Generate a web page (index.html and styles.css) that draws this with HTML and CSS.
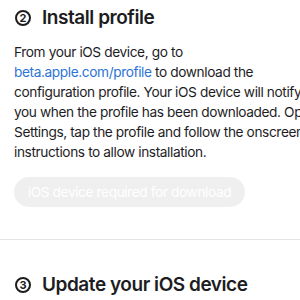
FILE: index.html
```html
<!DOCTYPE html>
<html>
<head>
<meta charset="utf-8">
<link rel="stylesheet" href="styles.css">
</head>
<body>
<main class="page">
  <section class="step">
    <h2 class="step-title"><span class="num">2</span>Install profile</h2>
    <p class="step-text">From your iOS device, go to <a class="link" href="#">beta.apple.com/profile</a> to download the configuration profile. Your iOS device will notify you when the profile has been downloaded. Open Settings, tap the profile and follow the onscreen instructions to allow installation.</p>
    <button class="btn" disabled>iOS device required for download</button>
  </section>
  <hr class="divider">
  <section class="step step-next">
    <h2 class="step-title"><span class="num">3</span>Update your iOS device</h2>
  </section>
</main>
</body>
</html>
```
FILE: styles.css
```css
html, body {
  margin: 0;
  padding: 0;
  background: #fff;
  overflow: hidden;
}
body {
  font-family: Inter, "Noto Sans", sans-serif;
  color: #1d1d1f;
  width: 300px;
  height: 300px;
}
.page {
  width: 360px;
}
.step {
  padding: 0 14px;
}
.step-title {
  margin: 0;
  padding-top: 6px;
  display: flex;
  align-items: center;
  gap: 11px;
  font-size: 19px;
  font-weight: 600;
  line-height: 24px;
  letter-spacing: -0.45px;
}
.num {
  box-sizing: border-box;
  flex: none;
  width: 16px;
  height: 16px;
  border: 2px solid #1d1d1f;
  border-radius: 50%;
  font-size: 11px;
  font-weight: 700;
  line-height: 12px;
  display: flex;
  align-items: center;
  justify-content: center;
  margin-left: 1px;
  letter-spacing: 0;
}
.step-text {
  margin: 12px 0 0;
  width: 305px;
  font-size: 13.7px;
  line-height: 20px;
  letter-spacing: -0.4px;
}
.link {
  color: #2d74d6;
  text-decoration: none;
}
.btn {
  margin-top: 15px;
  width: 231px;
  height: 30px;
  border: none;
  border-radius: 15px;
  background: #efefef;
  color: #fff;
  font-family: inherit;
  font-size: 13.7px;
  letter-spacing: -0.4px;
  padding: 0;
  display: block;
}
.divider {
  margin: 32px 0 0;
  border: none;
  height: 1px;
  background: #e3e3e3;
}
.step-next {
  padding-top: 27px;
}
```
